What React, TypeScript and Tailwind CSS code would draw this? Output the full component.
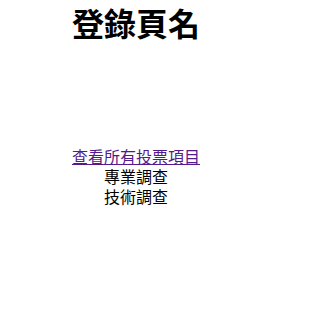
export default function App() {
  return (
    <div
      className="flex flex-col items-center text-center text-black bg-white w-[272px] h-[316px]"
      style={{ fontFamily: '"Noto Sans CJK TC", sans-serif' }}
    >
      <h1 className="text-[32px] font-bold leading-[40px] mt-[2px]">登錄頁名</h1>
      <div className="mt-[104px] flex flex-col items-center text-[16px] leading-[20px]">
        <a href="#" className="text-[#551a8b] underline">查看所有投票項目</a>
        <div>專業調查</div>
        <div>技術調查</div>
      </div>
    </div>
  );
}
